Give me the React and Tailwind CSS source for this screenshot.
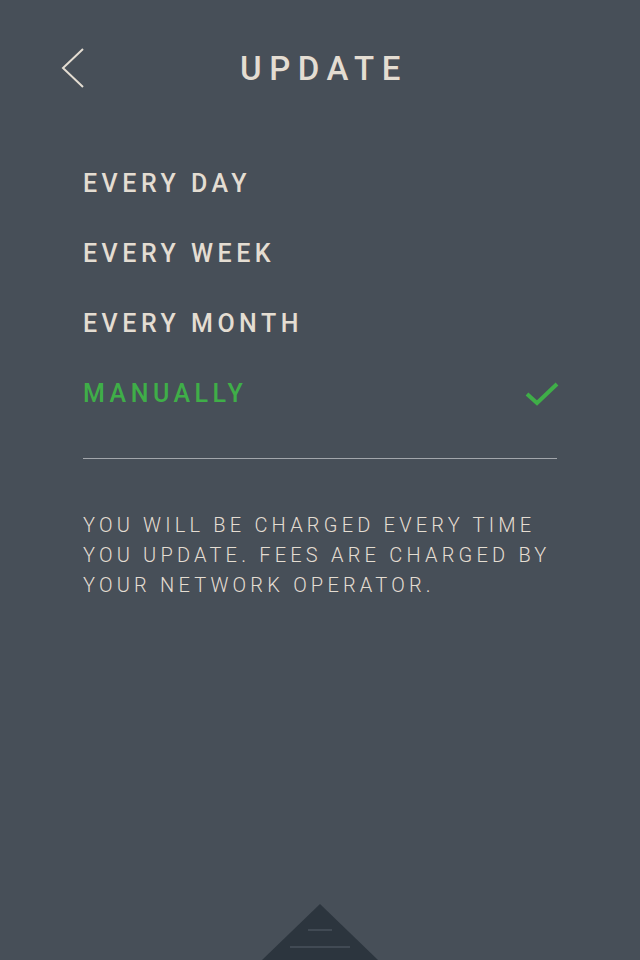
import { useState } from 'react'

const options = ['EVERY DAY', 'EVERY WEEK', 'EVERY MONTH', 'MANUALLY']

const App = () => {
  const [selected, setSelected] = useState('MANUALLY')

  return (
    <div
      className="relative w-[640px] h-[960px] overflow-hidden bg-[#474f58]"
      style={{ fontFamily: 'Roboto, "Liberation Sans", sans-serif' }}
    >
      <header className="relative flex items-center justify-center h-[149px] pb-[11px]">
        <button className="absolute left-[54px] top-[43px] p-1">
          <svg width="26" height="42" viewBox="0 0 26 42" fill="none">
            <path d="M25 2 L5 21 L25 40" stroke="#e4ddd2" strokeWidth="2" />
          </svg>
        </button>
        <h1 className="text-[33px] font-medium tracking-[0.23em] text-[#e4ddd2] ml-[8px]">UPDATE</h1>
      </header>

      <div className="px-[83px]">
        <ul className="flex flex-col">
          {options.map((opt) => {
            const active = opt === selected
            return (
              <li key={opt}>
                <button
                  onClick={() => setSelected(opt)}
                  className="flex items-center justify-between w-full h-[70px] text-left"
                >
                  <span
                    className={`text-[25px] font-medium tracking-[0.18em] ${
                      active ? 'text-[#3fae48]' : 'text-[#e4ddd2]'
                    }`}
                  >
                    {opt}
                  </span>
                  {active && (
                    <svg width="34" height="26" viewBox="0 0 34 26" fill="none" className="mr-[-2px]">
                      <path d="M2 13 L12 22 L32 3" stroke="#3fae48" strokeWidth="4" />
                    </svg>
                  )}
                </button>
              </li>
            )
          })}
        </ul>

        <div className="mt-[29px] border-t border-[#a2a6ab]" />

        <p className="mt-[51px] text-[20px] font-light leading-[30px] tracking-[0.21em] text-[#e4ddd2] uppercase">
          You will be charged every time you update. Fees are charged by your network operator.
        </p>
      </div>

      <div className="absolute left-1/2 -translate-x-1/2 bottom-0 w-[116px] h-[56px]">
        <svg width="116" height="56" viewBox="0 0 116 56">
          <polygon points="58,0 116,56 0,56" fill="#2c353e" />
          <line x1="46" y1="26" x2="70" y2="26" stroke="#56606a" strokeWidth="1" />
          <line x1="28" y1="43" x2="88" y2="43" stroke="#56606a" strokeWidth="1" />
        </svg>
      </div>
    </div>
  )
}

export default App
